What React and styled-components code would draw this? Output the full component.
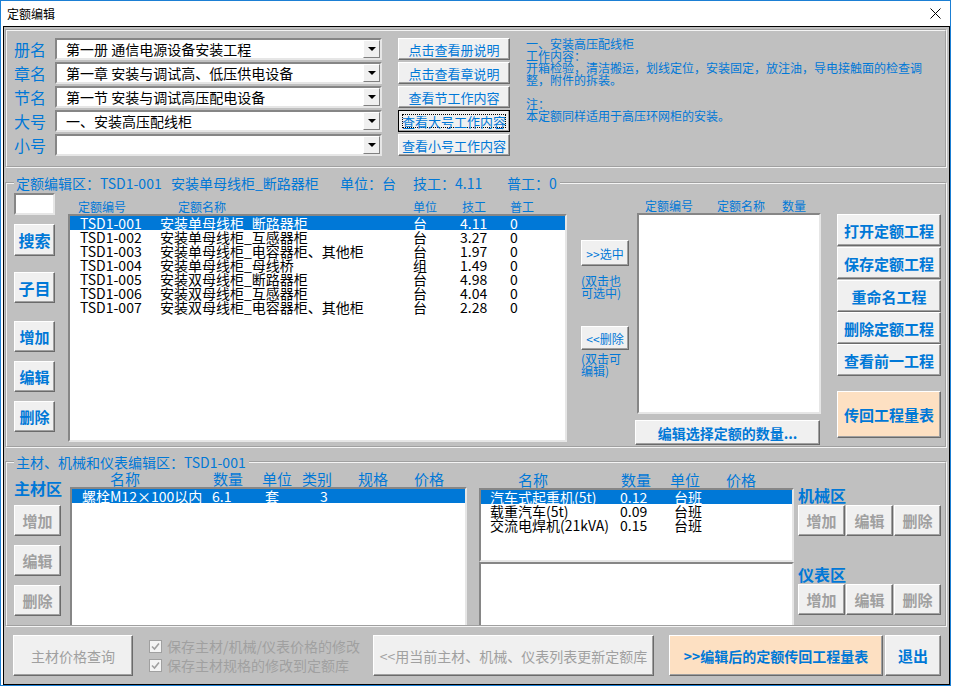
import React from "react";
import styled, { createGlobalStyle } from "styled-components";

const BLUE = "#0078d7";
const DIM = "#a0a0a0";

const GlobalStyle = createGlobalStyle`
  html, body { margin: 0; padding: 0; background: #fff; }
  body { font-family: "Noto Sans CJK SC", "Liberation Sans", sans-serif; }
  * { box-sizing: border-box; }
`;

const Window = styled.div`
  width: 951px;
  height: 686px;
  border: 1px solid #1b7fd4;
  display: flex;
  flex-direction: column;
  background: #fff;
`;

const TitleBar = styled.div`
  height: 25px;
  flex: none;
  display: flex;
  align-items: center;
  justify-content: space-between;
  padding: 0 9px 0 6px;
  font-size: 12px;
  color: #000;
`;

const Client = styled.div`
  flex: 1;
  margin-left: 2px;
  border: 1px solid #000;
  background: #c0c0c0;
  padding: 2px 2px 0 1px;
  display: flex;
  flex-direction: column;
  min-height: 0;
`;

const Frame = styled.fieldset`
  margin: ${(p) => p.$mt || 0}px 0 0 0;
  padding: 0;
  min-width: 0;
  height: ${(p) => p.$h}px;
  flex: none;
  border: 2px groove #f4f4f4;
  display: flex;
  flex-direction: column;
`;

const Legend = styled.legend`
  margin-left: 7px;
  padding: 0 3px 0 2px;
  font-size: 14px;
  line-height: 16px;
  color: ${BLUE};
  white-space: nowrap;
`;

const Seg = styled.span`
  display: inline-block;
  width: ${(p) => (p.$w ? `${p.$w}px` : "auto")};
`;

/* ---------- top selector area ---------- */

const TopGrid = styled.div`
  display: grid;
  grid-template-columns: 41px 327px 16px 112px 16px 1fr;
  grid-template-rows: repeat(5, 22px);
  row-gap: 2px;
  padding: 7px 0 0 7px;
`;

const FieldLabel = styled.div`
  grid-column: 1;
  font-size: 16px;
  line-height: 22px;
  color: ${BLUE};
  white-space: nowrap;
`;

const Combo = styled.div`
  grid-column: 2;
  display: flex;
  background: #fff;
  border: 2px solid;
  border-color: #868686 #e6e6e6 #e6e6e6 #868686;
  font-size: 14px;
  line-height: 18px;
  color: #000;
`;

const ComboText = styled.span`
  flex: 1;
  padding-left: 9px;
  white-space: nowrap;
  overflow: hidden;
`;

const DropBtn = styled.span`
  width: 17px;
  background: #f0f0f0;
  border: 1px solid;
  border-color: #fff #808080 #808080 #fff;
  display: flex;
  align-items: center;
  justify-content: center;
  &::before {
    content: "";
    border-left: 4px solid transparent;
    border-right: 4px solid transparent;
    border-top: 4px solid #000;
  }
`;

const Desc = styled.div`
  grid-column: 6;
  grid-row: 1 / span 5;
  font-size: 12px;
  line-height: 12px;
  color: ${BLUE};
  white-space: pre;
`;

/* ---------- buttons ---------- */

const Btn = styled.button`
  flex: none;
  font-family: inherit;
  width: ${(p) => p.$w}px;
  height: ${(p) => p.$h}px;
  margin: ${(p) => p.$mt || 0}px 0 0 ${(p) => p.$ml || 0}px;
  padding: 0;
  background: ${(p) => (p.$peach ? "#fde0c2" : "#f0f0f0")};
  border: 1px solid;
  border-color: ${(p) => (p.$focus ? "#000" : "#fff #6a6a6a #6a6a6a #fff")};
  box-shadow: inset -1px -1px 0 #a0a0a0;
  color: ${(p) => (p.disabled ? DIM : BLUE)};
  font-size: ${(p) => p.$fs || 13}px;
  font-weight: ${(p) => (p.$bold ? 700 : 400)};
  white-space: nowrap;
  display: flex;
  align-items: center;
  justify-content: center;
`;

const FocusRing = styled.span`
  width: calc(100% - 6px);
  height: calc(100% - 6px);
  border: 1px dotted #000;
  display: flex;
  align-items: center;
  justify-content: center;
`;

/* ---------- lists ---------- */

const ListBox = styled.div`
  flex: none;
  width: ${(p) => p.$w}px;
  height: ${(p) => p.$h}px;
  margin-left: ${(p) => p.$ml || 0}px;
  background: #fff;
  border: 2px solid;
  border-color: #868686 #e6e6e6 #e6e6e6 #868686;
  border-bottom-width: ${(p) => (p.$open ? 0 : 2)}px;
  overflow: hidden;
`;

const Row = styled.div`
  display: grid;
  grid-template-columns: ${(p) => p.$cols};
  padding-left: ${(p) => p.$pl}px;
  height: 14px;
  font-size: 14px;
  line-height: 14px;
  white-space: nowrap;
  background: ${(p) => (p.$sel ? "#0078d7" : "transparent")};
  color: ${(p) => (p.$sel ? "#fff" : "#000")};
`;

const Head = styled.div`
  display: grid;
  grid-template-columns: ${(p) => p.$cols};
  padding-left: ${(p) => p.$pl}px;
  height: ${(p) => p.$h}px;
  align-items: end;
  font-size: ${(p) => p.$fs}px;
  line-height: ${(p) => p.$fs + 2}px;
  color: ${BLUE};
  white-space: nowrap;
`;

const Col = styled.div`
  flex: none;
  display: flex;
  flex-direction: column;
  align-items: flex-start;
  width: ${(p) => p.$w}px;
  margin-left: ${(p) => p.$ml || 0}px;
`;

const Body = styled.div`
  flex: 1;
  display: flex;
  align-items: flex-start;
  min-height: 0;
`;

const TextInput = styled.div`
  width: 41px;
  height: 22px;
  margin-top: 2px;
  background: #fff;
  border: 2px solid;
  border-color: #868686 #e6e6e6 #e6e6e6 #868686;
`;

const Note = styled.div`
  margin-top: ${(p) => p.$mt || 0}px;
  font-size: 12px;
  line-height: 12px;
  color: ${BLUE};
  white-space: pre;
`;

const AreaLabel = styled.div`
  margin-top: ${(p) => p.$mt || 0}px;
  height: ${(p) => p.$h}px;
  font-size: 16px;
  font-weight: 700;
  line-height: ${(p) => p.$h}px;
  color: ${BLUE};
  white-space: nowrap;
`;

const BtnRow = styled.div`
  display: flex;
  gap: 1px;
`;

/* ---------- bottom bar ---------- */

const BottomBar = styled.div`
  flex: 1;
  display: flex;
  align-items: center;
  padding-left: 8px;
`;

const CheckCol = styled.div`
  flex: none;
  width: 224px;
  margin-left: 16px;
  display: flex;
  flex-direction: column;
  gap: 5px;
`;

const CheckRow = styled.label`
  display: flex;
  align-items: center;
  gap: 5px;
  font-size: 14px;
  line-height: 14px;
  color: ${DIM};
  white-space: nowrap;
`;

const CheckBox = styled.span`
  width: 13px;
  height: 13px;
  flex: none;
  background: #f4f4f4;
  border: 1px solid #a0a0a0;
  display: flex;
  align-items: center;
  justify-content: center;
`;

const Check = ({ children }) => (
  <CheckRow>
    <CheckBox>
      <svg width="9" height="9" viewBox="0 0 9 9">
        <path d="M1 4.5 L3.5 7 L8 1.5" fill="none" stroke="#a0a0a0" strokeWidth="1.6" />
      </svg>
    </CheckBox>
    {children}
  </CheckRow>
);

/* ---------- data ---------- */

const combos = [
  ["册名", "第一册 通信电源设备安装工程"],
  ["章名", "第一章 安装与调试高、低压供电设备"],
  ["节名", "第一节 安装与调试高压配电设备"],
  ["大号", "一、安装高压配线柜"],
  ["小号", ""],
];

const topButtons = ["点击查看册说明", "点击查看章说明", "查看节工作内容", "查看大号工作内容", "查看小号工作内容"];

const quotas = [
  ["TSD1-001", "安装单母线柜_断路器柜", "台", "4.11", "0"],
  ["TSD1-002", "安装单母线柜_互感器柜", "台", "3.27", "0"],
  ["TSD1-003", "安装单母线柜_电容器柜、其他柜", "台", "1.97", "0"],
  ["TSD1-004", "安装单母线柜_母线桥", "组", "1.49", "0"],
  ["TSD1-005", "安装双母线柜_断路器柜", "台", "4.98", "0"],
  ["TSD1-006", "安装双母线柜_互感器柜", "台", "4.04", "0"],
  ["TSD1-007", "安装双母线柜_电容器柜、其他柜", "台", "2.28", "0"],
];

const machines = [
  ["汽车式起重机(5t)", "0.12", "台班"],
  ["载重汽车(5t)", "0.09", "台班"],
  ["交流电焊机(21kVA)", "0.15", "台班"],
];

const desc =
  "一、安装高压配线柜\n工作内容：\n开箱检验，清洁搬运，划线定位，安装固定，放注油，导电接触面的检查调\n整，附件的拆装。\n\n注：\n本定额同样适用于高压环网柜的安装。";

const QUOTA_COLS = "80px 253px 47px 50px auto";
const MAT_COLS = "130px 53px 55px auto";
const MACH_COLS = "130px 54px auto";

export default function App() {
  return (
    <>
      <GlobalStyle />
      <Window>
        <TitleBar>
          <span>定额编辑</span>
          <svg width="11" height="11" viewBox="0 0 11 11">
            <path d="M0.5 0.5 L10.5 10.5 M10.5 0.5 L0.5 10.5" stroke="#000" strokeWidth="1" />
          </svg>
        </TitleBar>
        <Client>
          <Frame $h={139}>
            <TopGrid>
              {combos.map(([label, value], i) => (
                <React.Fragment key={label}>
                  <FieldLabel style={{ gridRow: i + 1 }}>{label}</FieldLabel>
                  <Combo style={{ gridRow: i + 1 }}>
                    <ComboText>{value}</ComboText>
                    <DropBtn />
                  </Combo>
                </React.Fragment>
              ))}
              {topButtons.map((t, i) => (
                <Btn
                  key={t}
                  $w={112}
                  $h={22}
                  $focus={i === 3}
                  style={{ gridColumn: 4, gridRow: i + 1 }}
                >
                  {i === 3 ? <FocusRing>{t}</FocusRing> : t}
                </Btn>
              ))}
              <Desc>{desc}</Desc>
            </TopGrid>
          </Frame>

          <Frame $h={273} $mt={7}>
            <Legend>
              <Seg $w={155}>定额编辑区：TSD1-001</Seg>
              <Seg $w={169}>安装单母线柜_断路器柜</Seg>
              <Seg $w={73}>单位：台</Seg>
              <Seg $w={94}>技工：4.11</Seg>
              <Seg>普工：0</Seg>
            </Legend>
            <Body>
              <Col $w={41} $ml={7}>
                <TextInput />
                <Btn $w={41} $h={32} $mt={9} $bold $fs={16}>搜索</Btn>
                <Btn $w={41} $h={31} $mt={16} $bold $fs={16}>子目</Btn>
                <Btn $w={41} $h={31} $mt={18} $bold $fs={15}>增加</Btn>
                <Btn $w={41} $h={31} $mt={9} $bold $fs={15}>编辑</Btn>
                <Btn $w={41} $h={31} $mt={9} $bold $fs={15}>删除</Btn>
              </Col>

              <Col $w={499} $ml={13}>
                <Head $cols="100px 235px 49px 48px auto" $pl={10} $h={23} $fs={12}>
                  <span>定额编号</span>
                  <span>定额名称</span>
                  <span>单位</span>
                  <span>技工</span>
                  <span>普工</span>
                </Head>
                <ListBox $w={499} $h={228}>
                  {quotas.map((q, i) => (
                    <Row key={q[0]} $cols={QUOTA_COLS} $pl={10} $sel={i === 0}>
                      {q.map((c, j) => (
                        <span key={j}>{c}</span>
                      ))}
                    </Row>
                  ))}
                </ListBox>
              </Col>

              <Col $w={49} $ml={14}>
                <Btn $w={48} $h={26} $mt={49} $fs={12}>&gt;&gt;选中</Btn>
                <Note $mt={9}>{"(双击也\n可选中)"}</Note>
                <Btn $w={48} $h={24} $mt={27} $fs={12}>&lt;&lt;删除</Btn>
                <Note $mt={3}>{"(双击可\n编辑)"}</Note>
              </Col>

              <Col $w={186} $ml={5}>
                <Head $cols="72px 65px auto" $pl={10} $h={22} $fs={12}>
                  <span>定额编号</span>
                  <span>定额名称</span>
                  <span>数量</span>
                </Head>
                <ListBox $w={184} $h={201} $ml={2} />
                <Btn $w={185} $h={25} $mt={6} $bold $fs={14}>编辑选择定额的数量...</Btn>
              </Col>

              <Col $w={104} $ml={16}>
                <Btn $w={104} $h={32} $mt={23} $bold $fs={15}>打开定额工程</Btn>
                <Btn $w={104} $h={32} $mt={1} $bold $fs={15}>保存定额工程</Btn>
                <Btn $w={104} $h={32} $mt={1} $bold $fs={15}>重命名工程</Btn>
                <Btn $w={104} $h={32} $mt={0} $bold $fs={15}>删除定额工程</Btn>
                <Btn $w={104} $h={32} $mt={0} $bold $fs={15}>查看前一工程</Btn>
                <Btn $w={104} $h={47} $mt={15} $bold $fs={15} $peach>传回工程量表</Btn>
              </Col>
            </Body>
          </Frame>

          <Frame $h={173} $mt={6}>
            <Legend>主材、机械和仪表编辑区：TSD1-001</Legend>
            <Body>
              <Col $w={47} $ml={7}>
                <AreaLabel $mt={8} $h={20}>主材区</AreaLabel>
                <Btn $w={47} $h={31} $mt={7} $bold $fs={15} disabled>增加</Btn>
                <Btn $w={47} $h={31} $mt={9} $bold $fs={15} disabled>编辑</Btn>
                <Btn $w={47} $h={31} $mt={9} $bold $fs={15} disabled>删除</Btn>
              </Col>

              <Col $w={397} $ml={9}>
                <Head $cols="103px 49px 40px 56px 56px auto" $pl={40} $h={17} $fs={15}>
                  <span>名称</span>
                  <span>数量</span>
                  <span>单位</span>
                  <span>类别</span>
                  <span>规格</span>
                  <span>价格</span>
                </Head>
                <ListBox $w={397} $h={138} $open>
                  <Row $cols={MAT_COLS} $pl={10} $sel>
                    <span>螺栓M12×100以内</span>
                    <span>6.1</span>
                    <span>套</span>
                    <span>3</span>
                  </Row>
                </ListBox>
              </Col>

              <Col $w={315} $ml={12}>
                <Head $cols="103px 49px 56px auto" $pl={39} $h={18} $fs={15}>
                  <span>名称</span>
                  <span>数量</span>
                  <span>单位</span>
                  <span>价格</span>
                </Head>
                <ListBox $w={315} $h={74}>
                  {machines.map((m, i) => (
                    <Row key={m[0]} $cols={MACH_COLS} $pl={9} $sel={i === 0}>
                      {m.map((c, j) => (
                        <span key={j}>{c}</span>
                      ))}
                    </Row>
                  ))}
                </ListBox>
                <ListBox $w={315} $h={63} $open />
              </Col>

              <Col $w={144} $ml={4}>
                <AreaLabel $mt={15} $h={20}>机械区</AreaLabel>
                <BtnRow>
                  <Btn $w={47} $h={31} $bold $fs={15} disabled>增加</Btn>
                  <Btn $w={47} $h={31} $bold $fs={15} disabled>编辑</Btn>
                  <Btn $w={47} $h={31} $bold $fs={15} disabled>删除</Btn>
                </BtnRow>
                <AreaLabel $mt={29} $h={19}>仪表区</AreaLabel>
                <BtnRow>
                  <Btn $w={47} $h={31} $bold $fs={15} disabled>增加</Btn>
                  <Btn $w={47} $h={31} $bold $fs={15} disabled>编辑</Btn>
                  <Btn $w={47} $h={31} $bold $fs={15} disabled>删除</Btn>
                </BtnRow>
              </Col>
            </Body>
          </Frame>

          <BottomBar>
            <Btn $w={120} $h={41} $fs={14} disabled>主材价格查询</Btn>
            <CheckCol>
              <Check>保存主材/机械/仪表价格的修改</Check>
              <Check>保存主材规格的修改到定额库</Check>
            </CheckCol>
            <Btn $w={281} $h={41} $fs={14} disabled>&lt;&lt;用当前主材、机械、仪表列表更新定额库</Btn>
            <Btn $w={214} $h={41} $ml={15} $bold $fs={14} $peach>&gt;&gt;编辑后的定额传回工程量表</Btn>
            <Btn $w={56} $h={41} $ml={2} $bold $fs={15}>退出</Btn>
          </BottomBar>
        </Client>
      </Window>
    </>
  );
}
